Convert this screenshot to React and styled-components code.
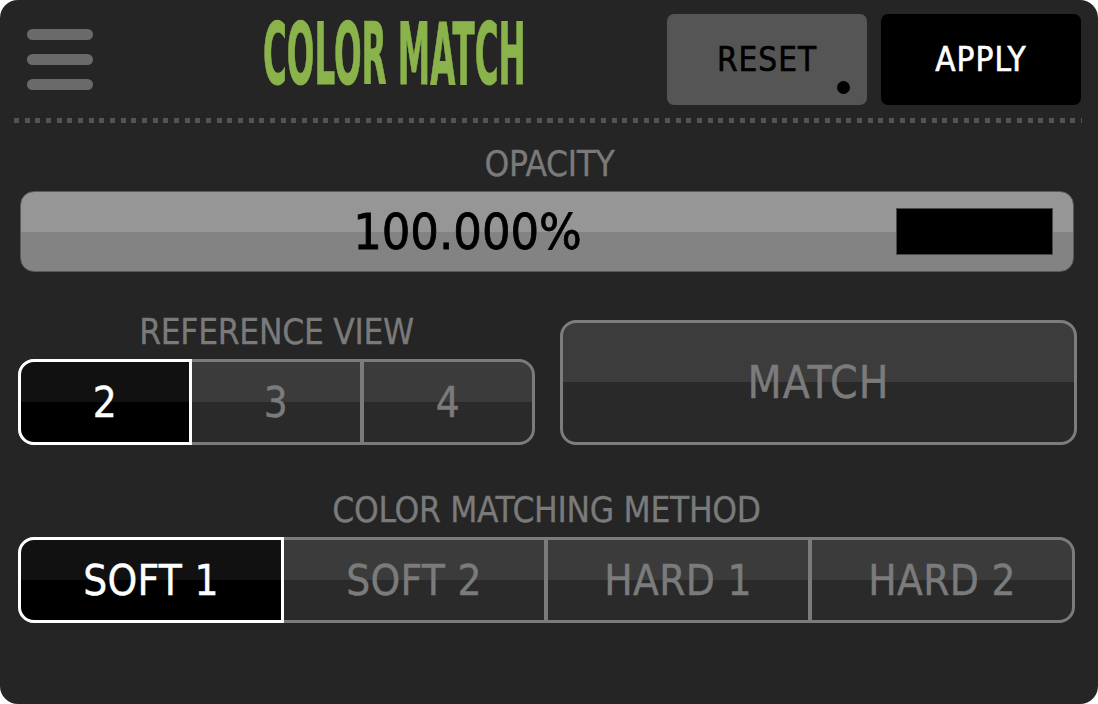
import React, { useState } from 'react';
import styled, { createGlobalStyle } from 'styled-components';

const GlobalStyle = createGlobalStyle`
  html, body {
    margin: 0;
    padding: 0;
    background: #ffffff;
  }
  body {
    font-family: "DejaVu Sans Condensed", "DejaVu Sans", sans-serif;
  }
`;

const Panel = styled.div`
  width: 1098px;
  height: 704px;
  box-sizing: border-box;
  background: #252525;
  border-radius: 18px;
  padding: 14px 17px 0 18px;
  display: flex;
  flex-direction: column;
  overflow: hidden;
`;

const Header = styled.div`
  display: flex;
  align-items: center;
  height: 91px;
`;

const Hamburger = styled.div`
  display: flex;
  flex-direction: column;
  gap: 14px;
  width: 66px;
  margin-left: 9px;
`;

const Bar = styled.div`
  height: 11px;
  border-radius: 6px;
  background: #6a6a6a;
`;

const TitleBox = styled.div`
  width: 262px;
  margin-left: 170px;
  align-self: flex-start;
  margin-top: -3px;
  height: 80px;
  overflow: visible;
  white-space: nowrap;
`;

const Title = styled.span`
  display: inline-block;
  font-family: "DejaVu Sans Condensed", "DejaVu Sans", sans-serif;
  font-weight: bold;
  font-size: 86px;
  line-height: 86px;
  color: #8bb34b;
  -webkit-text-stroke: 1px #8bb34b;
  transform: scaleX(0.42);
  transform-origin: left top;
`;

const Spacer = styled.div`
  flex: 1;
`;

const HeadButton = styled.button`
  position: relative;
  width: 200px;
  height: 91px;
  border: none;
  border-radius: 7px;
  margin-left: 14px;
  background: ${({ $dark }) => ($dark ? '#000000' : '#555555')};
  color: ${({ $dark }) => ($dark ? '#ffffff' : '#000000')};
  font-family: "DejaVu Sans Condensed", "DejaVu Sans", sans-serif;
  font-size: 33px;
  letter-spacing: 1px;
  -webkit-text-stroke: 0.6px currentColor;
  padding: 0;
  cursor: pointer;
`;

const Dot = styled.span`
  position: absolute;
  right: 17px;
  bottom: 11px;
  width: 13px;
  height: 13px;
  border-radius: 50%;
  background: #000;
`;

const Dotted = styled.div`
  margin: 13px -1px 0 -4px;
  height: 5px;
  background: repeating-linear-gradient(
    to right,
    #545454 0,
    #545454 5px,
    transparent 5px,
    transparent 10.67px
  );
`;

const Label = styled.div`
  text-align: center;
  color: #7a7a7a;
  font-size: 35px;
  line-height: 36px;
  letter-spacing: -0.3px;
  -webkit-text-stroke: 0.3px currentColor;
  margin-top: ${({ $top }) => $top}px;
`;

const Slider = styled.div`
  margin: 9px 7px 0 2px;
  height: 81px;
  box-sizing: border-box;
  border-radius: 14px;
  border: 1px solid #5a5a5a;
  background: linear-gradient(to bottom, #969696 0, #969696 50%, #838383 50%, #838383 100%);
  display: flex;
  align-items: center;
`;

const SliderValue = styled.div`
  flex: 1;
  text-align: center;
  padding-left: 18px;
  font-size: 50px;
  color: #000;
  -webkit-text-stroke: 0.8px #000;
`;

const Swatch = styled.div`
  width: 157px;
  height: 47px;
  box-sizing: border-box;
  background: #000;
  border: 1px solid #4a4a4a;
  margin-right: 20px;
`;

const Row = styled.div`
  display: grid;
  grid-template-columns: 517px 517px;
  column-gap: 25px;
  align-items: end;
  margin-top: 42px;
`;

const Column = styled.div`
  display: flex;
  flex-direction: column;
`;

const Segmented = styled.div`
  display: flex;
  height: 86px;
  box-sizing: border-box;
  margin-top: 9px;
  border: 3px solid #7b7b7b;
  border-radius: 16px;
  background: linear-gradient(to bottom, #3b3b3b 0, #3b3b3b 50%, #2a2a2a 50%, #2a2a2a 100%);
`;

const Segment = styled.button`
  flex: 1;
  min-width: 0;
  padding: 0;
  border: none;
  cursor: pointer;
  font-family: "DejaVu Sans Condensed", "DejaVu Sans", sans-serif;
  font-size: ${({ $size }) => $size}px;
  letter-spacing: 0.3px;
  -webkit-text-stroke: 0.4px currentColor;
  color: #7b7b7b;
  background: transparent;
  border-left: ${({ $divider }) => ($divider ? '4px solid #7b7b7b' : 'none')};

  &[data-active='true'] {
    color: #ffffff;
    margin: -3px 0 -3px -3px;
    border: 3px solid #ffffff;
    border-radius: 16px 0 0 16px;
    background: linear-gradient(to bottom, #111111 0, #111111 50%, #000000 50%, #000000 100%);
  }
`;

const MatchButton = styled.button`
  height: 125px;
  box-sizing: border-box;
  border: 3px solid #7d7d7d;
  border-radius: 16px;
  background: linear-gradient(to bottom, #3c3c3c 0, #3c3c3c 50%, #292929 50%, #292929 100%);
  color: #7b7b7b;
  font-family: "DejaVu Sans Condensed", "DejaVu Sans", sans-serif;
  font-size: 44px;
  letter-spacing: 1px;
  -webkit-text-stroke: 0.4px currentColor;
  cursor: pointer;
`;

const MethodRow = styled.div`
  display: flex;
  flex-direction: column;
  margin-right: 6px;
`;

const SegmentGroup = ({ items, active, onChange, size }) => (
  <Segmented>
    {items.map((item, i) => (
      <Segment
        key={item}
        data-active={i === active}
        $divider={i > 0 && i - 1 !== active && i !== active}
        $size={size}
        onClick={() => onChange(i)}
      >
        {item}
      </Segment>
    ))}
  </Segmented>
);

const App = () => {
  const [view, setView] = useState(0);
  const [method, setMethod] = useState(0);

  return (
    <>
      <GlobalStyle />
      <Panel>
        <Header>
          <Hamburger>
            <Bar />
            <Bar />
            <Bar />
          </Hamburger>
          <TitleBox>
            <Title>COLOR MATCH</Title>
          </TitleBox>
          <Spacer />
          <HeadButton>
            RESET
            <Dot />
          </HeadButton>
          <HeadButton $dark>APPLY</HeadButton>
        </Header>
        <Dotted />
        <Label $top={23}>OPACITY</Label>
        <Slider>
          <SliderValue>100.000%</SliderValue>
          <Swatch />
        </Slider>
        <Row>
          <Column>
            <Label $top={0}>REFERENCE VIEW</Label>
            <SegmentGroup items={['2', '3', '4']} active={view} onChange={setView} size={42} />
          </Column>
          <MatchButton>MATCH</MatchButton>
        </Row>
        <MethodRow>
          <Label $top={47}>COLOR MATCHING METHOD</Label>
          <SegmentGroup
            items={['SOFT 1', 'SOFT 2', 'HARD 1', 'HARD 2']}
            active={method}
            onChange={setMethod}
            size={42}
          />
        </MethodRow>
      </Panel>
    </>
  );
};

export default App;
